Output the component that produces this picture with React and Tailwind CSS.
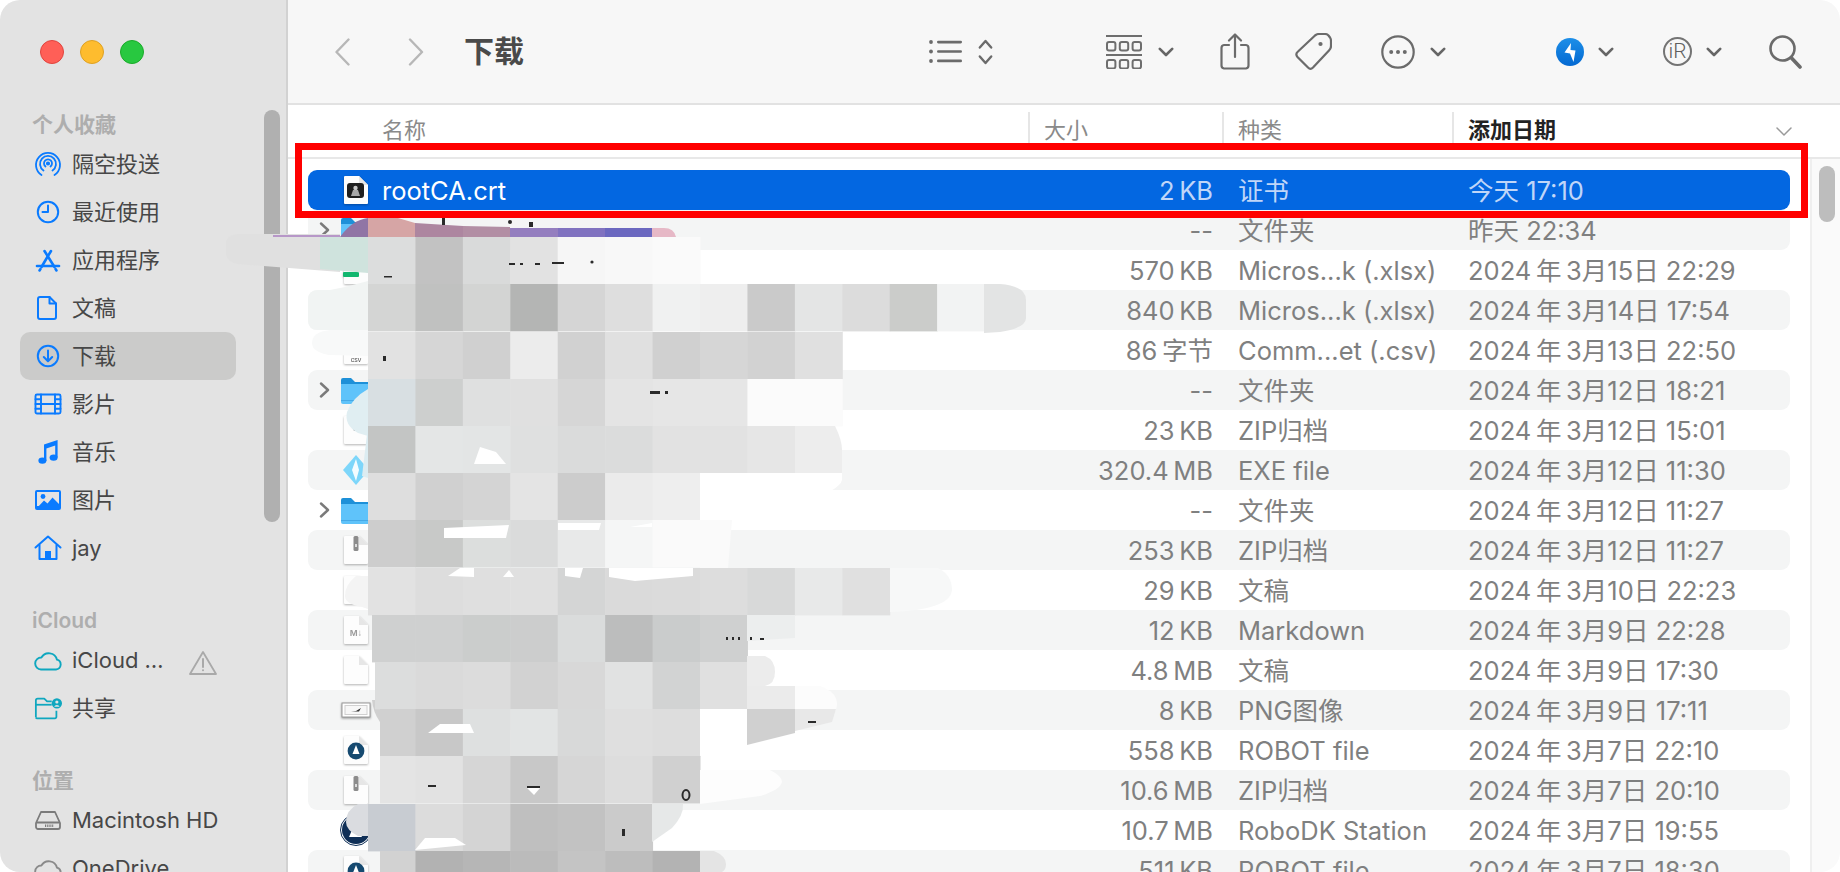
import React from "react";

const BLUE = "#0a7bff";
const TEAL = "#0fa7bf";

function Stroke({ color = BLUE, w = 2, children, size = 28 }) {
  return (
    <svg width={size} height={size} viewBox="0 0 28 28" fill="none" stroke={color} strokeWidth={w} strokeLinecap="round" strokeLinejoin="round">
      {children}
    </svg>
  );
}

const sideIcons = {
  airdrop: (
    <Stroke w={1.8}>
      <path d="M7.5 25A12 12 0 1 1 20.5 25" />
      <path d="M9.5 20.5A8 8 0 1 1 18.5 20.5" />
      <path d="M11.5 16.5A4 4 0 1 1 16.5 16.5" />
      <circle cx="14" cy="13.5" r="1.2" fill={BLUE} />
    </Stroke>
  ),
  clock: (
    <Stroke>
      <circle cx="14" cy="14" r="10.2" />
      <path d="M14 7.5V14H8.5" />
    </Stroke>
  ),
  apps: (
    <Stroke w={2.6}>
      <path d="M17 5L12.5 12.5L7.5 21" />
      <path d="M10.5 5L20.5 21" />
      <path d="M3 20H25" />
      <path d="M5.5 24.5L6.5 23M22.5 24.5L21.5 23" />
    </Stroke>
  ),
  doc: (
    <Stroke>
      <path d="M6 3H15.5L22 9.5V23A2 2 0 0 1 20 25H6A2 2 0 0 1 4 23V5A2 2 0 0 1 6 3Z" />
      <path d="M15.5 3V9.5H22" />
    </Stroke>
  ),
  download: (
    <Stroke>
      <circle cx="14" cy="14" r="10.2" />
      <path d="M14 8.5V19M9.8 15L14 19.3L18.2 15" />
    </Stroke>
  ),
  film: (
    <Stroke w={1.9}>
      <rect x="1.5" y="4.5" width="25" height="19" rx="1.5" />
      <path d="M7 4.5V23.5M21 4.5V23.5M7 14H21" />
      <path d="M1.5 9.2H7M1.5 14H7M1.5 18.8H7M21 9.2H26.5M21 14H26.5M21 18.8H26.5" />
    </Stroke>
  ),
  music: (
    <svg width="28" height="28" viewBox="0 0 28 28" fill={BLUE}>
      <path d="M10 6.6L23.6 2V19.5H21.2V7.5L12.4 10.4V23H10Z" />
      <ellipse cx="8.4" cy="22.6" rx="4" ry="3.2" />
      <ellipse cx="19.6" cy="19.6" rx="4" ry="3.2" />
    </svg>
  ),
  image: (
    <svg width="28" height="28" viewBox="0 0 28 28">
      <rect x="1" y="4" width="26" height="20" rx="2" fill={BLUE} />
      <rect x="3" y="6" width="22" height="14" fill="#e3e3e3" />
      <circle cx="9" cy="10.5" r="2.4" fill={BLUE} />
      <path d="M3 22L10 14.5L13.5 17.5L18.5 11.5L25 18V22Z" fill={BLUE} />
    </svg>
  ),
  home: (
    <svg width="28" height="28" viewBox="0 0 28 28" fill="none" stroke={BLUE} strokeWidth="2" strokeLinecap="round" strokeLinejoin="round">
      <path d="M1.5 13.5L14 2.5L26.5 13.5" />
      <path d="M5.5 11V25H22.5V11" />
      <rect x="11" y="17" width="6" height="8" fill={BLUE} stroke="none" />
    </svg>
  ),
  cloud: (
    <Stroke color={TEAL} w={1.9}>
      <path d="M7 23.5H22A5 5 0 0 0 23 13.7A8.5 8.5 0 0 0 7.4 11.5A6 6 0 0 0 7 23.5Z" />
    </Stroke>
  ),
  shared: (
    <svg width="30" height="28" viewBox="0 0 30 28" fill="none" stroke={TEAL} strokeWidth="1.9" strokeLinejoin="round">
      <path d="M2 24V6A2 2 0 0 1 4 4H11L14 7H19" />
      <path d="M2 10.5H19" />
      <path d="M2 24A1.5 1.5 0 0 0 3.5 25H22.5A1.5 1.5 0 0 0 24 23.5V17" />
      <circle cx="24.5" cy="9" r="5.5" fill={TEAL} stroke="none" />
      <circle cx="24.5" cy="7.6" r="1.7" fill="#e3e3e3" stroke="none" />
      <path d="M21.6 12.6A3 2.4 0 0 1 27.4 12.6Z" fill="#e3e3e3" stroke="none" />
    </svg>
  ),
  hd: (
    <svg width="28" height="28" viewBox="0 0 28 28" fill="none" stroke="#7b7b7b" strokeWidth="1.8" strokeLinejoin="round">
      <path d="M7 6H21L26 17V21A2 2 0 0 1 24 23H4A2 2 0 0 1 2 21V17Z" />
      <path d="M2.5 16.5H25.5" />
      <path d="M11 19.8H20" strokeDasharray="1.2 1" strokeWidth="2.4" />
    </svg>
  ),
  onedrive: (
    <Stroke color="#8a8a8a" w={1.9}>
      <path d="M7 23.5H22A5 5 0 0 0 23 13.7A8.5 8.5 0 0 0 7.4 11.5A6 6 0 0 0 7 23.5Z" />
    </Stroke>
  ),
};

function SideHead({ children, first }) {
  return (
    <div className={`${first ? "h-8" : "h-16 pt-8"} pl-[32px] flex items-center text-[21px] font-semibold leading-none text-[#aeaeae]`}>
      {children}
    </div>
  );
}

function SideItem({ icon, label, active, warn }) {
  return (
    <div className={`ml-[20px] w-[216px] h-12 pl-[14px] flex items-center rounded-[10px] ${active ? "bg-[#cbcbca]" : ""}`}>
      <span className="w-[28px] h-[28px] flex-none flex items-center justify-center">{sideIcons[icon]}</span>
      <span className="ml-[10px] text-[22px] leading-none text-[#474747] whitespace-nowrap">{label}</span>
      {warn && (
        <svg className="ml-auto mr-[19px] mt-[6px]" width="28" height="26" viewBox="0 0 28 26" fill="none" stroke="#a9a9a9" strokeWidth="1.8" strokeLinejoin="round">
          <path d="M14 2L27 24H1Z" />
          <path d="M14 9V17" strokeLinecap="round" strokeWidth="2" />
          <circle cx="14" cy="20.3" r="1" fill="#a9a9a9" stroke="none" />
        </svg>
      )}
    </div>
  );
}

function Sidebar() {
  return (
    <aside className="relative w-[288px] flex-none h-full overflow-hidden bg-[#e3e3e3] border-r-2 border-[#d2d2d2]">
      <div className="h-[108px] pt-[40px] pl-[40px] flex gap-[16px]">
        <span className="w-6 h-6 rounded-full bg-[#ff5f57] border border-[#e0443e]" />
        <span className="w-6 h-6 rounded-full bg-[#febc2e] border border-[#dea123]" />
        <span className="w-6 h-6 rounded-full bg-[#28c840] border border-[#1aab29]" />
      </div>
      <SideHead first>个人收藏</SideHead>
      <SideItem icon="airdrop" label="隔空投送" />
      <SideItem icon="clock" label="最近使用" />
      <SideItem icon="apps" label="应用程序" />
      <SideItem icon="doc" label="文稿" />
      <SideItem icon="download" label="下载" active />
      <SideItem icon="film" label="影片" />
      <SideItem icon="music" label="音乐" />
      <SideItem icon="image" label="图片" />
      <SideItem icon="home" label="jay" />
      <SideHead>iCloud</SideHead>
      <SideItem icon="cloud" label="iCloud …" warn />
      <SideItem icon="shared" label="共享" />
      <SideHead>位置</SideHead>
      <SideItem icon="hd" label="Macintosh HD" />
      <SideItem icon="onedrive" label="OneDrive" />
      <div className="absolute left-[264px] top-[110px] w-4 h-[412px] rounded-full bg-[#b0b0b0]" />
    </aside>
  );
}

function Chev({ className = "" }) {
  return (
    <svg className={`flex-none ${className}`} width="16" height="10" viewBox="0 0 16 10" fill="none" stroke="#666" strokeWidth="2.6" strokeLinecap="round" strokeLinejoin="round">
      <path d="M1.8 1.8L8 8L14.2 1.8" />
    </svg>
  );
}

function Toolbar() {
  return (
    <div className="h-[105px] flex-none flex items-center bg-[#f7f7f7] border-b-2 border-[#e2e2e2] overflow-hidden">
      <svg className="flex-none ml-[47px]" width="15" height="28" viewBox="0 0 15 28" fill="none" stroke="#b7b7b7" strokeWidth="2.4" strokeLinecap="round" strokeLinejoin="round">
        <path d="M13.5 1.5L1.5 14L13.5 26.5" />
      </svg>
      <svg className="flex-none ml-[58px]" width="16" height="28" viewBox="0 0 16 28" fill="none" stroke="#b7b7b7" strokeWidth="2.4" strokeLinecap="round" strokeLinejoin="round">
        <path d="M2 1.5L14 14L2 26.5" />
      </svg>
      <span className="ml-[40px] mb-[2px] w-[61px] flex-none text-[30px] font-semibold leading-none text-[#4a4a4a] whitespace-nowrap">下载</span>
      <svg className="flex-none ml-[404px]" width="33" height="23" viewBox="0 0 33 23" fill="#6b6b6b">
        <circle cx="2" cy="2" r="1.9" />
        <circle cx="2" cy="11.5" r="1.9" />
        <circle cx="2" cy="21" r="1.9" />
        <rect x="8" y="0.8" width="25" height="2.6" rx="1.3" />
        <rect x="8" y="10.2" width="25" height="2.6" rx="1.3" />
        <rect x="8" y="19.6" width="25" height="2.6" rx="1.3" />
      </svg>
      <svg className="flex-none ml-[16px]" width="15" height="26" viewBox="0 0 15 26" fill="none" stroke="#6b6b6b" strokeWidth="2.4" strokeLinecap="round" strokeLinejoin="round">
        <path d="M1.8 8.5L7.5 2L13.2 8.5" />
        <path d="M1.8 17.5L7.5 24L13.2 17.5" />
      </svg>
      <svg className="flex-none ml-[113px]" width="36" height="34" viewBox="0 0 36 34" fill="none" stroke="#6e6e6e" strokeWidth="2">
        <path d="M0 1H36M0 20H36" />
        <rect x="1" y="7" width="8.4" height="8.4" rx="2" />
        <rect x="13.8" y="7" width="8.4" height="8.4" rx="2" />
        <rect x="26.6" y="7" width="8.4" height="8.4" rx="2" />
        <rect x="1" y="25" width="8.4" height="8.4" rx="2" />
        <rect x="13.8" y="25" width="8.4" height="8.4" rx="2" />
        <rect x="26.6" y="25" width="8.4" height="8.4" rx="2" />
      </svg>
      <Chev className="ml-[16px]" />
      <svg className="flex-none ml-[46px]" width="30" height="37" viewBox="0 0 30 37" fill="none" stroke="#6b6b6b" strokeWidth="2.2" strokeLinecap="round" strokeLinejoin="round">
        <path d="M9 12H4A3 3 0 0 0 1.5 15V32.5A3 3 0 0 0 4 35.5H26A3 3 0 0 0 28.5 32.5V15A3 3 0 0 0 26 12H21" />
        <path d="M15 1.5V24M9 7.5L15 1.5L21 7.5" />
      </svg>
      <svg className="flex-none ml-[45px]" width="37" height="37" viewBox="0 0 37 37" fill="none" stroke="#6b6b6b" strokeWidth="2.2" strokeLinejoin="round">
        <path d="M3 18.5L20 2.5Q22 1 24 1H30Q32 1 33.5 2.5L35 4.5Q36 6 36 8V13Q36 15.5 34 17.5L18 34.5Q15.5 37 13 34.5L2.5 24Q0 21 3 18.5Z" />
        <circle cx="25.5" cy="11" r="2.1" fill="#6b6b6b" stroke="none" />
      </svg>
      <svg className="flex-none ml-[49px]" width="34" height="34" viewBox="0 0 34 34" fill="#6b6b6b">
        <circle cx="17" cy="17" r="15.7" fill="none" stroke="#6b6b6b" strokeWidth="2.2" />
        <circle cx="10.2" cy="17" r="2" />
        <circle cx="17" cy="17" r="2" />
        <circle cx="23.8" cy="17" r="2" />
      </svg>
      <Chev className="ml-[15px]" />
      <svg className="flex-none ml-[110px]" width="28" height="28" viewBox="0 0 28 28">
        <defs>
          <linearGradient id="boltBg" x1="0" y1="0" x2="0" y2="1">
            <stop offset="0" stopColor="#1d8fe8" />
            <stop offset="1" stopColor="#0469d2" />
          </linearGradient>
        </defs>
        <circle cx="14" cy="14" r="14" fill="url(#boltBg)" />
        <path d="M15 5L8.5 14.5L14 15.5L17.5 24L19.5 12.5L14.5 12Z" fill="#fff" />
      </svg>
      <Chev className="ml-[14px]" />
      <span className="ml-[49px] w-[29px] h-[29px] flex-none rounded-full border-2 border-[#747474] flex items-center justify-center text-[21px] font-light leading-none text-[#5f5f5f] font-[Roboto,sans-serif]">
        iR
      </span>
      <Chev className="ml-[14px]" />
      <svg className="flex-none ml-[47px]" width="33" height="34" viewBox="0 0 33 34" fill="none" stroke="#6b6b6b" strokeLinecap="round">
        <circle cx="13.5" cy="13.5" r="12" strokeWidth="2.6" />
        <path d="M22.5 23L31 32" strokeWidth="3.6" />
      </svg>
    </div>
  );
}

function Paper({ children, fold = "#e6e6e6" }) {
  return (
    <svg width="26" height="30" viewBox="0 0 26 30" className="drop-shadow-[0_1px_1px_rgba(0,0,0,0.3)]">
      <path d="M1 2A1 1 0 0 1 2 1H16L25 10V28A1 1 0 0 1 24 29H2A1 1 0 0 1 1 28Z" fill="#fdfdfd" />
      <path d="M16 1V10H25Z" fill={fold} />
      {children}
    </svg>
  );
}

function Folder() {
  return (
    <svg width="32" height="27" viewBox="0 0 32 27">
      <path d="M1 3A2 2 0 0 1 3 1H11L15 5H30A2 2 0 0 1 32 7V12H1Z" fill="#1d90d8" />
      <path d="M1 7H32V25A2 2 0 0 1 30 27H3A2 2 0 0 1 1 25Z" fill="#5fc3fa" />
      <rect x="1" y="23" width="31" height="1" fill="#46a9e6" />
    </svg>
  );
}

const fileIcons = {
  cert: (
    <Paper>
      <rect x="4" y="8" width="17" height="15" rx="3" fill="#1f1f1f" />
      <circle cx="12.5" cy="13" r="2.2" fill="#c8c8c8" />
      <path d="M8 21L10 15H15L17 21Z" fill="#a8a8a8" />
    </Paper>
  ),
  folder: <Folder />,
  xlsx: (
    <Paper>
      <rect x="0" y="17" width="16" height="5" rx="1" fill="#12b76f" />
    </Paper>
  ),
  csv: (
    <Paper>
      <text x="13" y="27" textAnchor="middle" fontSize="7" fill="#555" fontFamily="Liberation Sans, sans-serif">csv</text>
    </Paper>
  ),
  doc: <Paper />,
  zip: (
    <Paper>
      <rect x="10.5" y="1" width="5" height="15" rx="1.5" fill="#8c8c8c" />
      <rect x="12" y="9" width="2" height="3" fill="#dcdcdc" />
    </Paper>
  ),
  md: (
    <Paper>
      <text x="13" y="21" textAnchor="middle" fontSize="9.5" fontWeight="700" fill="#9c9c9c" fontFamily="Liberation Sans, sans-serif">M↓</text>
    </Paper>
  ),
  exe: (
    <svg width="28" height="32" viewBox="0 0 28 32">
      <path d="M14 1L1 16L14 31L27 16Z" fill="#7dd6fa" />
      <path d="M14 5L10 16L14 27L17 16Z" fill="#f4fcff" />
    </svg>
  ),
  png: (
    <svg width="30" height="17" viewBox="0 0 30 17" className="drop-shadow-[0_1px_1px_rgba(0,0,0,0.4)]">
      <rect x="1" y="1" width="28" height="14" fill="#fff" stroke="#9a9a9a" />
      <rect x="4" y="3.5" width="22" height="9" fill="#f7f7f7" stroke="#d0d0d0" />
      <path d="M10 9.5L15 9L20 6L18 9.5Z" fill="#333" />
    </svg>
  ),
  robot: (
    <Paper>
      <circle cx="13" cy="16" r="8.4" fill="#164a70" />
      <path d="M13 10L16.5 19H9.5Z" fill="#fff" />
    </Paper>
  ),
  station: (
    <svg width="32" height="32" viewBox="0 0 32 32">
      <circle cx="16" cy="16" r="15.5" fill="#fff" stroke="#0f2f57" />
      <circle cx="16" cy="16" r="14" fill="#0f2f57" />
      <path d="M15 9L22 23H9Z" fill="#fff" />
    </svg>
  ),
};

const rows = [
  ["folder", "--", "文件夹", "昨天 22:34", true],
  ["xlsx", "570\u2009KB", "Micros...k (.xlsx)", "2024\u2009年\u20093月15日 22:29"],
  ["xlsx", "840\u2009KB", "Micros...k (.xlsx)", "2024\u2009年\u20093月14日 17:54"],
  ["csv", "86\u2009字节", "Comm...et (.csv)", "2024\u2009年\u20093月13日 22:50"],
  ["folder", "--", "文件夹", "2024\u2009年\u20093月12日 18:21", true],
  ["zip", "23\u2009KB", "ZIP归档", "2024\u2009年\u20093月12日 15:01"],
  ["exe", "320.4\u2009MB", "EXE file", "2024\u2009年\u20093月12日 11:30"],
  ["folder", "--", "文件夹", "2024\u2009年\u20093月12日 11:27", true],
  ["zip", "253\u2009KB", "ZIP归档", "2024\u2009年\u20093月12日 11:27"],
  ["doc", "29\u2009KB", "文稿", "2024\u2009年\u20093月10日 22:23"],
  ["md", "12\u2009KB", "Markdown", "2024\u2009年\u20093月9日 22:28"],
  ["doc", "4.8\u2009MB", "文稿", "2024\u2009年\u20093月9日 17:30"],
  ["png", "8\u2009KB", "PNG图像", "2024\u2009年\u20093月9日 17:11"],
  ["robot", "558\u2009KB", "ROBOT file", "2024\u2009年\u20093月7日 22:10"],
  ["zip", "10.6\u2009MB", "ZIP归档", "2024\u2009年\u20093月7日 20:10"],
  ["station", "10.7\u2009MB", "RoboDK Station", "2024\u2009年\u20093月7日 19:55"],
  ["robot", "511\u2009KB", "ROBOT file", "2024\u2009年\u20093月7日 18:30"],
];

function Row({ icon, size, kind, date, folder, name, selected, striped }) {
  const sub = selected ? "text-[#c0d6f8]" : "text-[#7f8080]";
  return (
    <div
      className={`h-10 flex-none flex items-center rounded-[9px] text-[25.5px] leading-none whitespace-nowrap ${
        selected ? "bg-[#0367e1]" : striped ? "bg-[#f4f5f5]" : "bg-white"
      }`}
    >
      <span className="w-[30px] flex-none flex justify-center pl-[2px]">
        {folder && (
          <svg width="11" height="16" viewBox="0 0 11 16" fill="none" stroke="#7a7a7a" strokeWidth="2.4" strokeLinecap="round" strokeLinejoin="round">
            <path d="M2 1.5L9 8L2 14.5" />
          </svg>
        )}
      </span>
      <span className="w-[36px] flex-none flex justify-center">{fileIcons[icon]}</span>
      <span className="ml-2 mt-[2px] w-[660px] flex-none text-white">{name}</span>
      <span className={`mt-[2px] w-[171px] flex-none text-right ${sub}`}>{size}</span>
      <span className={`ml-[25px] mt-[2px] w-[230px] flex-none ${sub}`}>{kind}</span>
      <span className={`mt-[2px] ${sub}`}>{date}</span>
    </div>
  );
}

function HeadCell({ width, bold, first, children }) {
  return (
    <div
      className={`flex-none flex items-center h-[33px] pt-[2px] self-start mt-[7px] text-[22px] leading-none ${width} ${first ? "pl-[94px]" : "border-l-2 border-[#e6e6e6] pl-[14px]"} ${
        bold ? "font-semibold text-[#222]" : "text-[#8a8a8a]"
      }`}
    >
      {children}
    </div>
  );
}

function TableHead() {
  return (
    <div className="relative h-[54px] flex-none flex border-b-2 border-[#e8e8e8] bg-white">
      <HeadCell width="w-[740px]" first>名称</HeadCell>
      <HeadCell width="w-[194px]">大小</HeadCell>
      <HeadCell width="w-[230px]">种类</HeadCell>
      <HeadCell width="w-[340px]" bold>添加日期</HeadCell>
      <svg className="absolute left-[1488px] top-[22px]" width="16" height="9" viewBox="0 0 16 9" fill="none" stroke="#9a9a9a" strokeWidth="1.5" strokeLinecap="round" strokeLinejoin="round">
        <path d="M1 1L8 8L15 1" />
      </svg>
    </div>
  );
}

const COL = 47.43;
const mosaic = [
  [237, ["#dcdddd", "#c2c2c2", "#d9dada", "#e2e2e2", "#f6f6f6", "#f8f8f8", "#fafafa"]],
  [284, ["#d4d5d4", "#c0c1c0", "#d3d4d3", "#b4b5b4", "#d5d5d5", "#dedede", "#f0f1f1", "#eeeeee", "#cacaca", "#e4e5e5", "#dcdcdc", "#cbccca", "#f2f3f3"]],
  [332, ["#e2e2e2", "#d6d6d6", "#d0d0d0", "#ececec", "#d1d1d1", "#e0e0e0", "#d0d0d0", "#d6d6d6", "#d2d2d2", "#e0e0e0"]],
  [379, ["#d8dfe2", "#cdcfce", "#dfe0e0", "#e0e0e0", "#d6d6d6", "#e4e4e4", "#e6e6e6", "#e6e6e6", "#fbfbfb", "#fbfbfb"]],
  [426, ["#c3c5c4", "#e4e6e6", "#e3e5e5", "#dfe0e0", "#dadbdb", "#dbdcdc", "#e2e2e2", "#e2e2e2", "#e6e6e6"]],
  [473, ["#dedede", "#d0d0d0", "#d4d4d4", "#e4e4e4", "#cccccc", "#ebebeb", "#eeeeee"]],
  [520, ["#cdcdcd", "#c8c9c8", "#dcdedd", "#dadbdb", "#e8e9e9", "#f5f6f6", "#fafafa"]],
  [568, ["#e2e2e2", "#dddddd", "#dfdfdf", "#e0e0e0", "#d4d5d5", "#dadada", "#dbdbdb", "#dddddd", "#d8d9d9", "#e8e9e9", "#e0e0e0"]],
  [615, ["#cfd0d0", "#cfd0d0", "#cbcdcc", "#cccdcd", "#dadcdc", "#bcbdbd", "#cacccc", "#cfd0d0"]],
  [662, ["#dcdddd", "#dadada", "#dcdcdc", "#d2d2d2", "#d8d8d8", "#e1e2e2", "#d2d3d3", "#e0e0e0"]],
  [709, ["#d0d0d0", "#c8c8c8", "#dee0e0", "#e2e4e4", "#d8d9d9", "#dfdfdf", "#dddddd"]],
  [756, ["#e4e4e4", "#e2e2e2", "#d6d6d6", "#c8c8c8", "#d6d6d6", "#dddddd", "#d0d0d0"]],
  [804, ["#c8ccd2", "#dcdcdc", "#d4d4d4", "#bfbfbf", "#c2c2c2", "#cbcbcb"]],
  [851, ["#d2d2d2", "#b2b2b2", "#b6b6b6", "#bbbbbb", "#c4c4c4", "#bdbdbd", "#b3b3b3"]],
];
const mosaicLeft = { 615: 372, 662: 375, 709: 380, 756: 380, 851: 380 };

function Redaction() {
  return (
    <svg className="absolute left-0 top-0 pointer-events-none" width="1840" height="872" viewBox="0 0 1840 872">
      {/* smear across the sidebar edge */}
      <path d="M240 234H340V272L238 264Q226 262 226 252V244Q226 234 240 234Z" fill="#e0e0e0" />
      <path d="M273 235H340V237H273Z" fill="#b797c8" />
      <path d="M320 237H368V273L320 269Z" fill="#cfe3dd" />
      <path d="M340 237Q352 220 368 218V237Z" fill="#9075a5" />
      <path d="M368 218H398L415 223V237H368Z" fill="#d6a5a5" />
      <path d="M415 223L463 226V237H415Z" fill="#ad86a0" />
      <path d="M463 226L510 227V237H463Z" fill="#b28ea4" />
      <rect x="510" y="228" width="48" height="9" fill="#947ebf" />
      <rect x="558" y="228" width="47" height="9" fill="#8072c0" />
      <rect x="605" y="228" width="47" height="9" fill="#6b68c0" />
      <path d="M652 228H664Q674 228 676 237H652Z" fill="#e6b8c6" />
      <path d="M652 237H676V270Q676 278 666 280L652 284Z" fill="#f9faf9" />
      {/* blobs over the icon column */}
      <path d="M368 281L345 287L330 290H318Q308 290 308 300V320Q308 330 318 330H368Z" fill="#f1f4f3" />
      <path d="M368 330H330Q312 332 312 343Q312 352 330 355L368 356Z" fill="#f8f9f9" />
      <path d="M368 389Q352 398 347 412Q344 425 358 433L368 436Z" fill="#e0eef2" />
      <path d="M368 426V478L362 476Z" fill="#dcecf1" />
      <path d="M368 576H356Q345 585 345 596Q345 604 362 607L368 609Z" fill="#f4f4f4" />
      <path d="M372 700Q373 712 380 722V700Z" fill="#d0d0d0" />
      <path d="M368 804H358Q346 810 346 822Q346 830 358 836H368Z" fill="#dadce0" />
      {mosaic.map(([y, cols], r) => {
        const h = r === mosaic.length - 1 ? 21 : 47.4;
        return cols.map((c, i) => {
          const base = 368 + i * COL;
          const left = i === 0 && mosaicLeft[y] ? mosaicLeft[y] : base;
          return <rect key={`${y}-${i}`} x={left} y={y} width={base + COL - left + 0.5} height={h} fill={c} />;
        });
      })}
      {/* soft edges on the right side of the block */}
      <path d="M984 284H1000Q1026 286 1026 300V318Q1026 328 1000 332L984 333Z" fill="#e3e4e4" />
      <path d="M795 379H838Q842 392 840 400L830 426H795Z" fill="#fbfbfb" />
      <path d="M795 426H835Q842 440 842 450V473H795Z" fill="#ededed" />
      <path d="M700 473H842V480Q840 490 800 505L700 520Z" fill="#ffffff" />
      <path d="M700 520H732L728 568H700Z" fill="#fafafa" />
      <path d="M890 568H938Q952 575 952 590Q950 610 890 612Z" fill="#f7f8f8" />
      <path d="M747 615H795V638L747 641Z" fill="#eceeee" />
      <path d="M747 656H765Q775 660 775 672Q775 684 765 686H747Z" fill="#ececec" />
      <path d="M747 686H795V709H747Z" fill="#ebebeb" />
      <path d="M795 686H820Q837 692 837 704Q837 716 820 720H795Z" fill="#fcfcfc" />
      <path d="M700 709H747V747L700 756Z" fill="#ffffff" />
      <path d="M747 709H795V733L747 745Z" fill="#d0d0d0" />
      <path d="M795 709H836L832 722L795 731Z" fill="#e8e8e8" />
      <path d="M700 770H770Q782 776 782 782Q780 790 760 796L700 804Z" fill="#fdfdfd" />
      <path d="M652 804H683Q684 815 672 828L652 842Z" fill="#e6e8e8" />
      <path d="M700 851H714Q726 856 726 864Q726 870 722 872H700Z" fill="#e4e4e4" />
      {/* bits of text the smear left showing */}
      <g fill="#2a2a2a">
        <rect x="442" y="218" width="3" height="7" />
        <circle cx="510" cy="222" r="2" />
        <rect x="529" y="222" width="4" height="5" />
        <rect x="509" y="263" width="6" height="2" />
        <rect x="520" y="263" width="3" height="2" />
        <rect x="535" y="263" width="5" height="2" />
        <rect x="552" y="262" width="12" height="2" />
        <circle cx="592" cy="262" r="1.6" />
        <rect x="384" y="276" width="8" height="1.5" />
        <rect x="383" y="356" width="3" height="5" />
        <rect x="650" y="391" width="10" height="3" />
        <rect x="665" y="391" width="3" height="3" />
        <rect x="726" y="637" width="2" height="3" />
        <rect x="732" y="637" width="2" height="3" />
        <rect x="738" y="637" width="2" height="3" />
        <rect x="750" y="637" width="2" height="3" />
        <rect x="760" y="638" width="4" height="2" />
        <rect x="808" y="721" width="8" height="2" />
      </g>
      <g fill="#ffffff">
        <path d="M480 447L496 452L506 464H474Z" />
        <path d="M448 576L460 568H474V577Z" />
        <path d="M503 577L509 570L514 577Z" />
        <path d="M565 568H583L580 578L565 576Z" />
        <path d="M609 568H693V576L635 581L609 577Z" />
        <path d="M444 528L509 525L506 538H444Z" />
        <path d="M558 523H601L599 530H558Z" />
        <path d="M630 527L652 523V527Z" />
        <path d="M428 733L440 724H470L474 733Z" />
        <path d="M415 850L425 838H455L466 845Z" />
        <path d="M527 788H540L534 795Z" />
      </g>
      <g fill="#2a2a2a">
        <rect x="428" y="785" width="8" height="2" />
        <rect x="527" y="786" width="13" height="2" />
        <rect x="622" y="829" width="3" height="7" />
      </g>
      <ellipse cx="686" cy="795" rx="3.5" ry="5" fill="none" stroke="#2a2a2a" strokeWidth="2" />
    </svg>
  );
}

export default function App() {
  return (
    <div className="relative w-[1840px] h-[872px] overflow-hidden rounded-[20px] bg-white flex font-[Inter,'Noto_Sans_CJK_SC',sans-serif]">
      <Sidebar />
      <main className="flex-1 min-w-0 flex flex-col">
        <Toolbar />
        <TableHead />
        <div className="flex-1 min-h-0 flex overflow-hidden">
          <div className="w-[1522px] flex-none px-[20px] pt-[11px] flex flex-col">
            <Row icon="cert" size={"2\u2009KB"} kind="证书" date="今天 17:10" name="rootCA.crt" selected />
            {rows.map(([icon, size, kind, date, folder], i) => (
              <Row key={i} icon={icon} size={size} kind={kind} date={date} folder={folder} striped={i % 2 === 0} />
            ))}
          </div>
          <div className="flex-1 bg-[#fafafa] border-l-2 border-[#efefef] pl-[7px] pt-[7px]">
            <div className="w-4 h-14 rounded-full bg-[#bdbdbd]" />
          </div>
        </div>
      </main>
      <Redaction />
      <div className="absolute left-[295px] top-[143px] w-[1513px] h-[75px] border-[7px] border-[#ff0000] pointer-events-none" />
    </div>
  );
}
